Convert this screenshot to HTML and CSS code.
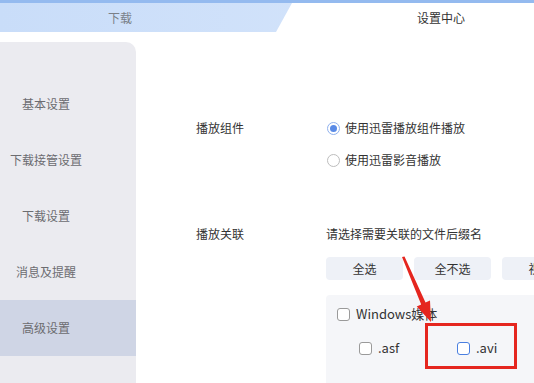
FILE: index.html
```html
<!DOCTYPE html>
<html lang="zh-CN">

<head>
    <meta charset="UTF-8">
    <title>设置中心</title>
    <link rel="stylesheet" href="styles.css">
</head>

<body>

    <!-- Tabs -->
    <div class="tabs">
        <div class="tab tab-download">下载</div>
        <div class="tab tab-active">设置中心</div>
    </div>

    <div class="main">
        <!-- Sidebar -->
        <aside class="sidebar">
            <div class="nav-item">基本设置</div>
            <div class="nav-item">下载接管设置</div>
            <div class="nav-item">下载设置</div>
            <div class="nav-item">消息及提醒</div>
            <div class="nav-item active">高级设置</div>
        </aside>

        <!-- Settings -->
        <section class="content">
            <div class="setting-row">
                <div class="setting-label">播放组件</div>
                <div class="setting-body options">
                    <label class="radio-line"><span class="radio checked"></span>使用迅雷播放组件播放</label>
                    <label class="radio-line"><span class="radio"></span>使用迅雷影音播放</label>
                </div>
            </div>

            <div class="setting-row assoc">
                <div class="setting-label">播放关联</div>
                <div class="setting-body">
                    <div class="hint">请选择需要关联的文件后缀名</div>
                    <div class="buttons">
                        <button class="btn">全选</button>
                        <button class="btn">全不选</button>
                        <button class="btn">视频</button>
                    </div>
                    <div class="ext-box">
                        <label class="check-line group"><span class="checkbox"></span>Windows媒体</label>
                        <div class="ext-list">
                            <label class="check-line ext"><span class="checkbox"></span>.asf</label>
                            <label class="check-line ext"><span class="checkbox hover"></span>.avi</label>
                        </div>
                    </div>
                </div>
            </div>
        </section>
    </div>

    <!-- Annotation -->
    <svg class="annotation" width="534" height="383" viewBox="0 0 534 383">
        <polygon points="402,257 404.5,256.5 425.5,302.6 430,300.6 431,322 416.7,306.6 421.2,304.6" fill="#e5261f" />
        <rect x="426.5" y="324.5" width="89" height="43" fill="none" stroke="#e5261f" stroke-width="3" />
    </svg>

</body>

</html>
```

FILE: styles.css
```css
body {
    font-family: "Noto Sans CJK SC", "Noto Sans", sans-serif;
    margin: 0;
    padding: 0;
    width: 534px;
    height: 383px;
    overflow: hidden;
    background-color: #fff;
    color: #333;
    position: relative;
}

/* Tabs */
.tabs {
    display: flex;
    height: 29px;
    border-top: 3px solid #94baef;
    background: linear-gradient(to right, #c9ddf9, #d7e6fb);
}

.tab {
    font-size: 12px;
    line-height: 29px;
}

.tab-download {
    width: 276px;
    text-align: center;
    padding-right: 36px;
    box-sizing: border-box;
    color: #7a7f88;
}

.tab-active {
    flex-grow: 1;
    background-color: #fff;
    clip-path: polygon(16px 0, 100% 0, 100% 100%, 0 100%);
    padding-left: 141px;
    color: #333;
}

/* Layout */
.main {
    display: flex;
    height: 351px;
}

.sidebar {
    width: 136px;
    flex-shrink: 0;
    margin-top: 10px;
    padding-top: 34px;
    background-color: #ebebf0;
    border-top-right-radius: 10px;
}

.nav-item {
    height: 56px;
    line-height: 56px;
    padding-right: 44px;
    text-align: center;
    font-size: 12px;
    color: #6c6c70;
}

.nav-item.active {
    background-color: #cfd5e5;
}

.content {
    flex-grow: 1;
    padding-left: 60px;
    padding-top: 86px;
    font-size: 12px;
}

.setting-row {
    display: flex;
}

.setting-row.assoc {
    margin-top: 54px;
}

.setting-label {
    width: 130px;
    flex-shrink: 0;
    line-height: 20px;
}

.setting-body {
    flex-grow: 1;
}

.options {
    display: flex;
    flex-direction: column;
    gap: 12px;
}

/* Radios */
.radio-line {
    display: flex;
    align-items: center;
    line-height: 20px;
    gap: 5px;
}

.radio {
    width: 11px;
    height: 11px;
    border: 1px solid #bdbdbd;
    border-radius: 50%;
    margin-left: 1px;
    position: relative;
}

.radio.checked {
    border-color: #8fb1ee;
}

.radio.checked::after {
    content: "";
    position: absolute;
    left: 2px;
    top: 2px;
    width: 7px;
    height: 7px;
    border-radius: 50%;
    background-color: #5a8be6;
}

.hint {
    line-height: 20px;
}

/* Buttons */
.buttons {
    display: flex;
    gap: 11px;
    margin-top: 13px;
    white-space: nowrap;
}

.btn {
    width: 77px;
    height: 23px;
    flex-shrink: 0;
    border: none;
    border-radius: 4px;
    background-color: #eef1f7;
    font-family: inherit;
    font-size: 12px;
    color: #333;
    padding: 0;
}

/* Extension box */
.ext-box {
    margin-top: 15px;
    width: 240px;
    height: 100px;
    padding: 9px 11px;
    background-color: #f5f6f9;
    border-radius: 4px;
}

.check-line {
    display: flex;
    align-items: center;
    gap: 6px;
    line-height: 20px;
}

.check-line.group {
    font-size: 13px;
}

.ext-list {
    display: flex;
    margin-top: 14px;
    padding-left: 22px;
}

.check-line.ext {
    width: 98px;
    font-size: 13px;
}

.checkbox {
    width: 11px;
    height: 11px;
    border: 1px solid #9a9a9a;
    border-radius: 3px;
    background-color: #fff;
}

.checkbox.hover {
    border-color: #4a7fe0;
}

/* Annotation overlay */
.annotation {
    position: absolute;
    left: 0;
    top: 0;
    pointer-events: none;
}
```
